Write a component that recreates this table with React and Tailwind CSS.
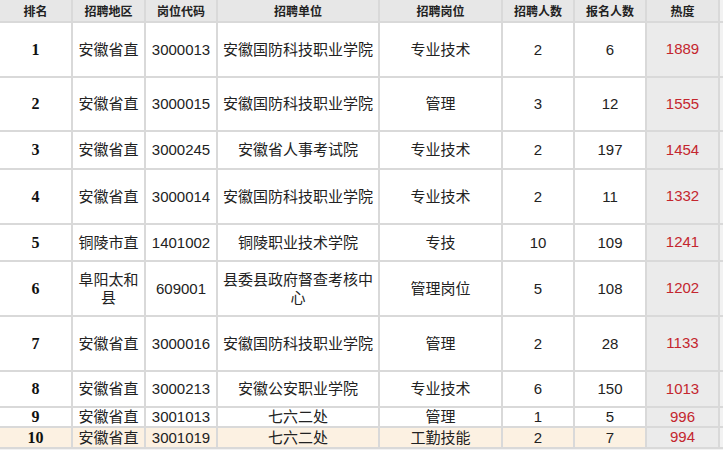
import React from "react";

const rows = [
  { rank: "1", area: "安徽省直", code: "3000013", unit: "安徽国防科技职业学院", post: "专业技术", need: "2", apply: "6", heat: "1889", h: "h-[53px]" },
  { rank: "2", area: "安徽省直", code: "3000015", unit: "安徽国防科技职业学院", post: "管理", need: "3", apply: "12", heat: "1555", h: "h-[52px]" },
  { rank: "3", area: "安徽省直", code: "3000245", unit: "安徽省人事考试院", post: "专业技术", need: "2", apply: "197", heat: "1454", h: "h-[36px]" },
  { rank: "4", area: "安徽省直", code: "3000014", unit: "安徽国防科技职业学院", post: "专业技术", need: "2", apply: "11", heat: "1332", h: "h-[53px]" },
  { rank: "5", area: "铜陵市直", code: "1401002", unit: "铜陵职业技术学院", post: "专技", need: "10", apply: "109", heat: "1241", h: "h-[35px]" },
  { rank: "6", area: "阜阳太和县", code: "609001", unit: "县委县政府督查考核中心", post: "管理岗位", need: "5", apply: "108", heat: "1202", h: "h-[53px]" },
  { rank: "7", area: "安徽省直", code: "3000016", unit: "安徽国防科技职业学院", post: "管理", need: "2", apply: "28", heat: "1133", h: "h-[53px]" },
  { rank: "8", area: "安徽省直", code: "3000213", unit: "安徽公安职业学院", post: "专业技术", need: "6", apply: "150", heat: "1013", h: "h-[34px]" },
  { rank: "9", area: "安徽省直", code: "3001013", unit: "七六二处", post: "管理", need: "1", apply: "5", heat: "996", h: "h-[18px]" },
  { rank: "10", area: "安徽省直", code: "3001019", unit: "七六二处", post: "工勤技能", need: "2", apply: "7", heat: "994", h: "h-[19px]", hl: true },
];

const headers = ["排名", "招聘地区", "岗位代码", "招聘单位", "招聘岗位", "招聘人数", "报名人数", "热度"];

const body = "font-['Liberation_Sans','Noto_Sans_CJK_SC',sans-serif] text-[15px] leading-[18px] text-[#222]";

export default function App() {
  return (
    <div className="w-[723px] h-[450px] overflow-hidden bg-[#f2f2f2]">
      <div className="grid grid-cols-[71px_71px_70px_160px_121px_70px_70px_71px_1fr] gap-[2px] bg-[#d9d9d9] pb-[2px]">
        {headers.map((t) => (
          <div
            key={t}
            className="h-[21px] bg-[#e7e7e7] flex items-center justify-center font-['Noto_Sans_CJK_SC',sans-serif] font-bold text-[12px] text-[#222]"
          >
            {t}
          </div>
        ))}
        <div className="bg-[#f2f2f2]" />
        {rows.map((r) => {
          const bg = r.hl ? "bg-[#fcf1e2]" : "bg-white";
          const cell = `${r.h} ${bg} flex items-center justify-center text-center px-[4px] ${body}`;
          return (
            <React.Fragment key={r.rank}>
              <div className={`${r.h} ${bg} flex items-center justify-center font-['Liberation_Serif',serif] font-bold text-[16px] text-[#111]`}>
                {r.rank}
              </div>
              <div className={cell}>{r.area}</div>
              <div className={cell}>{r.code}</div>
              <div className={cell}>{r.unit}</div>
              <div className={cell}>{r.post}</div>
              <div className={cell}>{r.need}</div>
              <div className={cell}>{r.apply}</div>
              <div className={`${r.h} bg-[#ebebeb] flex items-center justify-center font-['Liberation_Sans',sans-serif] text-[15px] text-[#c4262e]`}>
                {r.heat}
              </div>
              <div className="bg-[#f2f2f2]" />
            </React.Fragment>
          );
        })}
      </div>
    </div>
  );
}
